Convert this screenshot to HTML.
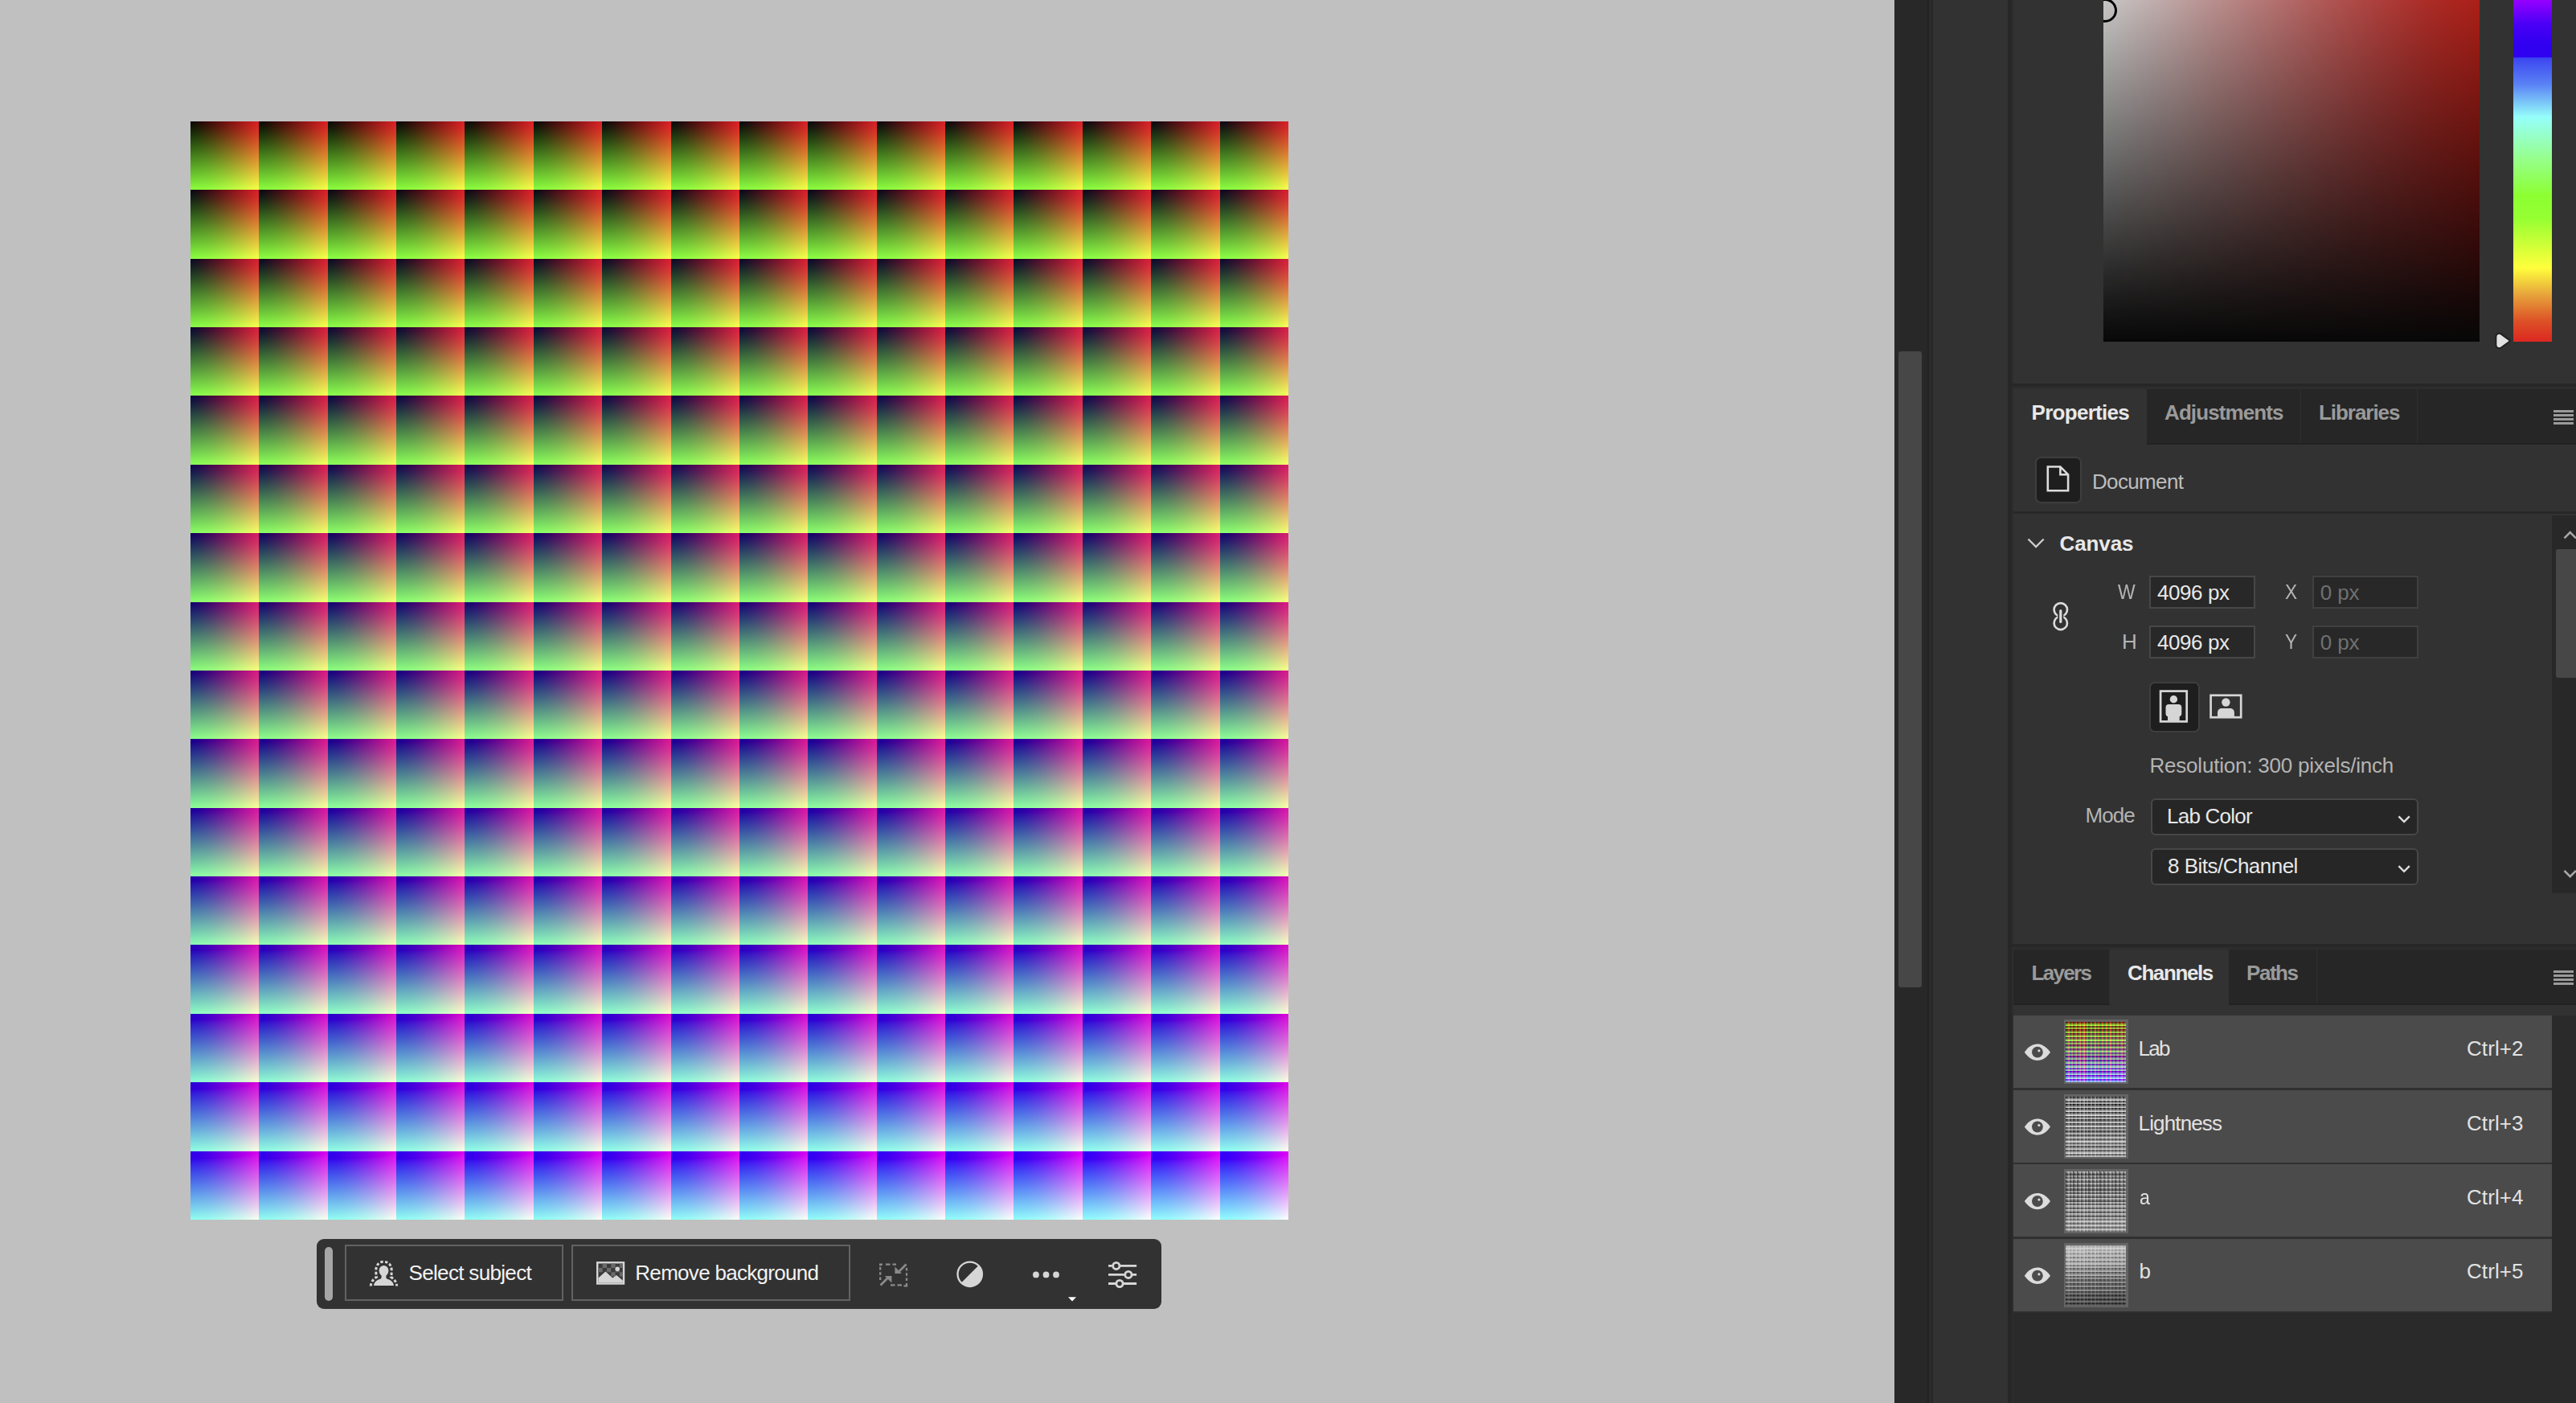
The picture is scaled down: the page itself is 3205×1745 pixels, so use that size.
<!DOCTYPE html>
<html lang="en"><head><meta charset="utf-8"><title>Lab Color document</title>
<style>
html,body{margin:0;padding:0}
body{width:3205px;height:1745px;overflow:hidden;background:#c0c0c0;position:relative;font-family:"Liberation Sans",sans-serif;font-size:26px}
div,i,b,svg{position:absolute;box-sizing:border-box;display:block}
.t{white-space:nowrap;line-height:30px;height:30px}
/* artwork */
.art{left:237px;top:151px;width:1366px;height:1366px;overflow:hidden;filter:url(#cm);isolation:isolate;background:#000}
.art .bl{left:0;top:0;width:1366px;height:1366px}
.art .bl div{left:0;width:1366px;height:85.9px}
.art .rg,.art .gg{left:0;top:0;width:1366px;height:1366px;mix-blend-mode:screen}
.art .rg{background:repeating-linear-gradient(90deg,#000 0,#f00 85.375px)}
.art .gg{background:repeating-linear-gradient(180deg,#000 0,#0f0 85.375px)}
/* thumbs */
.th{left:2568px;width:80px;height:80px;background:#646464}
.thi{left:2px;top:3px;width:75px;height:75px;overflow:hidden;isolation:isolate;background:#000}
.thi i{left:0;width:75.5px;height:5px}
.thi b{left:0;top:0;width:75.5px;height:75.5px;mix-blend-mode:screen}
.thi b.r{background:repeating-linear-gradient(90deg,#000 0,#f00 4.71875px)}
.thi b.g{background:repeating-linear-gradient(180deg,#000 0,#0f0 4.71875px)}
/* toolbar */
.tb{left:394px;top:1541px;width:1050.5px;height:86.6px;background:#323232;border-radius:9px}
.grip{left:403.6px;top:1551px;width:10.6px;height:67px;background:#a6a6a6;border-radius:5.3px}
.btn{top:1548px;height:70px;border:2px solid #626262}
/* right side */
.p{background:#323232}
.d{background:#282828}
.inp{width:131.5px;height:41px;background:#282828;border:2px solid #474747}
.dd{left:2675.7px;width:333px;height:46px;background:#262626;border:2px solid #474747;border-radius:6px}
.sq{background:#1e1e1e;border:2px solid #3e3e3e;border-radius:7px}
.row{left:2505px;width:670px;height:89.8px;background:#4b4b4b}
</style></head>
<body>
<svg width="0" height="0" style="left:0;top:0">
<defs>
<filter id="cm" x="0" y="0" width="100%" height="100%" color-interpolation-filters="linearRGB">
<feColorMatrix type="matrix" values="0.715 0.256 0.029 0 0.002  0.012 1.0 -0.016 0 0.002  0.0156 0.0465 0.938 0 0.0015  0 0 0 1 0"/>
</filter>
<filter id="cm2" x="0" y="0" width="100%" height="100%" color-interpolation-filters="linearRGB">
<feColorMatrix type="matrix" values="0.715 0.256 0.029 0 0.002  0.022 1.0 -0.016 0 0.002  0.013 0.0465 0.938 0 0.002  0 0 0 1 0"/>
</filter>
<filter id="fL" x="0" y="0" width="100%" height="100%" color-interpolation-filters="linearRGB">
<feColorMatrix type="matrix" values="0.2126 0.7152 0.0722 0 0  0.2126 0.7152 0.0722 0 0  0.2126 0.7152 0.0722 0 0  0 0 0 1 0"/>
</filter>
<filter id="fa" x="0" y="0" width="100%" height="100%" color-interpolation-filters="sRGB">
<feComponentTransfer><feFuncR type="gamma" exponent="2.2"/><feFuncG type="gamma" exponent="2.2"/><feFuncB type="gamma" exponent="2.2"/></feComponentTransfer>
<feColorMatrix type="matrix" values="0.4339 0.3762 0.1899 0 0  0.2126 0.7152 0.0722 0 0  0.0178 0.1095 0.8727 0 0  0 0 0 1 0"/>
<feComponentTransfer><feFuncR type="gamma" exponent="0.3333"/><feFuncG type="gamma" exponent="0.3333"/><feFuncB type="gamma" exponent="0.3333"/></feComponentTransfer>
<feColorMatrix type="matrix" values="1.96 -1.96 0 0 0.5  1.96 -1.96 0 0 0.5  1.96 -1.96 0 0 0.5  0 0 0 1 0"/>
</filter>
<filter id="fb" x="0" y="0" width="100%" height="100%" color-interpolation-filters="sRGB">
<feComponentTransfer><feFuncR type="gamma" exponent="2.2"/><feFuncG type="gamma" exponent="2.2"/><feFuncB type="gamma" exponent="2.2"/></feComponentTransfer>
<feColorMatrix type="matrix" values="0.4339 0.3762 0.1899 0 0  0.2126 0.7152 0.0722 0 0  0.0178 0.1095 0.8727 0 0  0 0 0 1 0"/>
<feComponentTransfer><feFuncR type="gamma" exponent="0.3333"/><feFuncG type="gamma" exponent="0.3333"/><feFuncB type="gamma" exponent="0.3333"/></feComponentTransfer>
<feColorMatrix type="matrix" values="0 0.784 -0.784 0 0.5  0 0.784 -0.784 0 0.5  0 0.784 -0.784 0 0.5  0 0 0 1 0"/>
</filter>
</defs>
</svg>
<!-- document artwork -->
<div class="art"><div class="bl"><div style="top:0.000px;background:linear-gradient(90deg,rgb(0,0,0) 0% 6.25%,rgb(0,0,1) 6.25% 12.5%,rgb(0,0,2) 12.5% 18.75%,rgb(0,0,3) 18.75% 25%,rgb(0,0,4) 25% 31.25%,rgb(0,0,5) 31.25% 37.5%,rgb(0,0,6) 37.5% 43.75%,rgb(0,0,7) 43.75% 50%,rgb(0,0,8) 50% 56.25%,rgb(0,0,9) 56.25% 62.5%,rgb(0,0,10) 62.5% 68.75%,rgb(0,0,11) 68.75% 75%,rgb(0,0,12) 75% 81.25%,rgb(0,0,13) 81.25% 87.5%,rgb(0,0,14) 87.5% 93.75%,rgb(0,0,15) 93.75% 100%)"></div><div style="top:85.375px;background:linear-gradient(90deg,rgb(0,0,16) 0% 6.25%,rgb(0,0,17) 6.25% 12.5%,rgb(0,0,18) 12.5% 18.75%,rgb(0,0,19) 18.75% 25%,rgb(0,0,20) 25% 31.25%,rgb(0,0,21) 31.25% 37.5%,rgb(0,0,22) 37.5% 43.75%,rgb(0,0,23) 43.75% 50%,rgb(0,0,24) 50% 56.25%,rgb(0,0,25) 56.25% 62.5%,rgb(0,0,26) 62.5% 68.75%,rgb(0,0,27) 68.75% 75%,rgb(0,0,28) 75% 81.25%,rgb(0,0,29) 81.25% 87.5%,rgb(0,0,30) 87.5% 93.75%,rgb(0,0,31) 93.75% 100%)"></div><div style="top:170.750px;background:linear-gradient(90deg,rgb(0,0,32) 0% 6.25%,rgb(0,0,33) 6.25% 12.5%,rgb(0,0,34) 12.5% 18.75%,rgb(0,0,35) 18.75% 25%,rgb(0,0,36) 25% 31.25%,rgb(0,0,37) 31.25% 37.5%,rgb(0,0,38) 37.5% 43.75%,rgb(0,0,39) 43.75% 50%,rgb(0,0,40) 50% 56.25%,rgb(0,0,41) 56.25% 62.5%,rgb(0,0,42) 62.5% 68.75%,rgb(0,0,43) 68.75% 75%,rgb(0,0,44) 75% 81.25%,rgb(0,0,45) 81.25% 87.5%,rgb(0,0,46) 87.5% 93.75%,rgb(0,0,47) 93.75% 100%)"></div><div style="top:256.125px;background:linear-gradient(90deg,rgb(0,0,48) 0% 6.25%,rgb(0,0,49) 6.25% 12.5%,rgb(0,0,50) 12.5% 18.75%,rgb(0,0,51) 18.75% 25%,rgb(0,0,52) 25% 31.25%,rgb(0,0,53) 31.25% 37.5%,rgb(0,0,54) 37.5% 43.75%,rgb(0,0,55) 43.75% 50%,rgb(0,0,56) 50% 56.25%,rgb(0,0,57) 56.25% 62.5%,rgb(0,0,58) 62.5% 68.75%,rgb(0,0,59) 68.75% 75%,rgb(0,0,60) 75% 81.25%,rgb(0,0,61) 81.25% 87.5%,rgb(0,0,62) 87.5% 93.75%,rgb(0,0,63) 93.75% 100%)"></div><div style="top:341.500px;background:linear-gradient(90deg,rgb(0,0,64) 0% 6.25%,rgb(0,0,65) 6.25% 12.5%,rgb(0,0,66) 12.5% 18.75%,rgb(0,0,67) 18.75% 25%,rgb(0,0,68) 25% 31.25%,rgb(0,0,69) 31.25% 37.5%,rgb(0,0,70) 37.5% 43.75%,rgb(0,0,71) 43.75% 50%,rgb(0,0,72) 50% 56.25%,rgb(0,0,73) 56.25% 62.5%,rgb(0,0,74) 62.5% 68.75%,rgb(0,0,75) 68.75% 75%,rgb(0,0,76) 75% 81.25%,rgb(0,0,77) 81.25% 87.5%,rgb(0,0,78) 87.5% 93.75%,rgb(0,0,79) 93.75% 100%)"></div><div style="top:426.875px;background:linear-gradient(90deg,rgb(0,0,80) 0% 6.25%,rgb(0,0,81) 6.25% 12.5%,rgb(0,0,82) 12.5% 18.75%,rgb(0,0,83) 18.75% 25%,rgb(0,0,84) 25% 31.25%,rgb(0,0,85) 31.25% 37.5%,rgb(0,0,86) 37.5% 43.75%,rgb(0,0,87) 43.75% 50%,rgb(0,0,88) 50% 56.25%,rgb(0,0,89) 56.25% 62.5%,rgb(0,0,90) 62.5% 68.75%,rgb(0,0,91) 68.75% 75%,rgb(0,0,92) 75% 81.25%,rgb(0,0,93) 81.25% 87.5%,rgb(0,0,94) 87.5% 93.75%,rgb(0,0,95) 93.75% 100%)"></div><div style="top:512.250px;background:linear-gradient(90deg,rgb(0,0,96) 0% 6.25%,rgb(0,0,97) 6.25% 12.5%,rgb(0,0,98) 12.5% 18.75%,rgb(0,0,99) 18.75% 25%,rgb(0,0,100) 25% 31.25%,rgb(0,0,101) 31.25% 37.5%,rgb(0,0,102) 37.5% 43.75%,rgb(0,0,103) 43.75% 50%,rgb(0,0,104) 50% 56.25%,rgb(0,0,105) 56.25% 62.5%,rgb(0,0,106) 62.5% 68.75%,rgb(0,0,107) 68.75% 75%,rgb(0,0,108) 75% 81.25%,rgb(0,0,109) 81.25% 87.5%,rgb(0,0,110) 87.5% 93.75%,rgb(0,0,111) 93.75% 100%)"></div><div style="top:597.625px;background:linear-gradient(90deg,rgb(0,0,112) 0% 6.25%,rgb(0,0,113) 6.25% 12.5%,rgb(0,0,114) 12.5% 18.75%,rgb(0,0,115) 18.75% 25%,rgb(0,0,116) 25% 31.25%,rgb(0,0,117) 31.25% 37.5%,rgb(0,0,118) 37.5% 43.75%,rgb(0,0,119) 43.75% 50%,rgb(0,0,120) 50% 56.25%,rgb(0,0,121) 56.25% 62.5%,rgb(0,0,122) 62.5% 68.75%,rgb(0,0,123) 68.75% 75%,rgb(0,0,124) 75% 81.25%,rgb(0,0,125) 81.25% 87.5%,rgb(0,0,126) 87.5% 93.75%,rgb(0,0,127) 93.75% 100%)"></div><div style="top:683.000px;background:linear-gradient(90deg,rgb(0,0,128) 0% 6.25%,rgb(0,0,129) 6.25% 12.5%,rgb(0,0,130) 12.5% 18.75%,rgb(0,0,131) 18.75% 25%,rgb(0,0,132) 25% 31.25%,rgb(0,0,133) 31.25% 37.5%,rgb(0,0,134) 37.5% 43.75%,rgb(0,0,135) 43.75% 50%,rgb(0,0,136) 50% 56.25%,rgb(0,0,137) 56.25% 62.5%,rgb(0,0,138) 62.5% 68.75%,rgb(0,0,139) 68.75% 75%,rgb(0,0,140) 75% 81.25%,rgb(0,0,141) 81.25% 87.5%,rgb(0,0,142) 87.5% 93.75%,rgb(0,0,143) 93.75% 100%)"></div><div style="top:768.375px;background:linear-gradient(90deg,rgb(0,0,144) 0% 6.25%,rgb(0,0,145) 6.25% 12.5%,rgb(0,0,146) 12.5% 18.75%,rgb(0,0,147) 18.75% 25%,rgb(0,0,148) 25% 31.25%,rgb(0,0,149) 31.25% 37.5%,rgb(0,0,150) 37.5% 43.75%,rgb(0,0,151) 43.75% 50%,rgb(0,0,152) 50% 56.25%,rgb(0,0,153) 56.25% 62.5%,rgb(0,0,154) 62.5% 68.75%,rgb(0,0,155) 68.75% 75%,rgb(0,0,156) 75% 81.25%,rgb(0,0,157) 81.25% 87.5%,rgb(0,0,158) 87.5% 93.75%,rgb(0,0,159) 93.75% 100%)"></div><div style="top:853.750px;background:linear-gradient(90deg,rgb(0,0,160) 0% 6.25%,rgb(0,0,161) 6.25% 12.5%,rgb(0,0,162) 12.5% 18.75%,rgb(0,0,163) 18.75% 25%,rgb(0,0,164) 25% 31.25%,rgb(0,0,165) 31.25% 37.5%,rgb(0,0,166) 37.5% 43.75%,rgb(0,0,167) 43.75% 50%,rgb(0,0,168) 50% 56.25%,rgb(0,0,169) 56.25% 62.5%,rgb(0,0,170) 62.5% 68.75%,rgb(0,0,171) 68.75% 75%,rgb(0,0,172) 75% 81.25%,rgb(0,0,173) 81.25% 87.5%,rgb(0,0,174) 87.5% 93.75%,rgb(0,0,175) 93.75% 100%)"></div><div style="top:939.125px;background:linear-gradient(90deg,rgb(0,0,176) 0% 6.25%,rgb(0,0,177) 6.25% 12.5%,rgb(0,0,178) 12.5% 18.75%,rgb(0,0,179) 18.75% 25%,rgb(0,0,180) 25% 31.25%,rgb(0,0,181) 31.25% 37.5%,rgb(0,0,182) 37.5% 43.75%,rgb(0,0,183) 43.75% 50%,rgb(0,0,184) 50% 56.25%,rgb(0,0,185) 56.25% 62.5%,rgb(0,0,186) 62.5% 68.75%,rgb(0,0,187) 68.75% 75%,rgb(0,0,188) 75% 81.25%,rgb(0,0,189) 81.25% 87.5%,rgb(0,0,190) 87.5% 93.75%,rgb(0,0,191) 93.75% 100%)"></div><div style="top:1024.500px;background:linear-gradient(90deg,rgb(0,0,192) 0% 6.25%,rgb(0,0,193) 6.25% 12.5%,rgb(0,0,194) 12.5% 18.75%,rgb(0,0,195) 18.75% 25%,rgb(0,0,196) 25% 31.25%,rgb(0,0,197) 31.25% 37.5%,rgb(0,0,198) 37.5% 43.75%,rgb(0,0,199) 43.75% 50%,rgb(0,0,200) 50% 56.25%,rgb(0,0,201) 56.25% 62.5%,rgb(0,0,202) 62.5% 68.75%,rgb(0,0,203) 68.75% 75%,rgb(0,0,204) 75% 81.25%,rgb(0,0,205) 81.25% 87.5%,rgb(0,0,206) 87.5% 93.75%,rgb(0,0,207) 93.75% 100%)"></div><div style="top:1109.875px;background:linear-gradient(90deg,rgb(0,0,208) 0% 6.25%,rgb(0,0,209) 6.25% 12.5%,rgb(0,0,210) 12.5% 18.75%,rgb(0,0,211) 18.75% 25%,rgb(0,0,212) 25% 31.25%,rgb(0,0,213) 31.25% 37.5%,rgb(0,0,214) 37.5% 43.75%,rgb(0,0,215) 43.75% 50%,rgb(0,0,216) 50% 56.25%,rgb(0,0,217) 56.25% 62.5%,rgb(0,0,218) 62.5% 68.75%,rgb(0,0,219) 68.75% 75%,rgb(0,0,220) 75% 81.25%,rgb(0,0,221) 81.25% 87.5%,rgb(0,0,222) 87.5% 93.75%,rgb(0,0,223) 93.75% 100%)"></div><div style="top:1195.250px;background:linear-gradient(90deg,rgb(0,0,224) 0% 6.25%,rgb(0,0,225) 6.25% 12.5%,rgb(0,0,226) 12.5% 18.75%,rgb(0,0,227) 18.75% 25%,rgb(0,0,228) 25% 31.25%,rgb(0,0,229) 31.25% 37.5%,rgb(0,0,230) 37.5% 43.75%,rgb(0,0,231) 43.75% 50%,rgb(0,0,232) 50% 56.25%,rgb(0,0,233) 56.25% 62.5%,rgb(0,0,234) 62.5% 68.75%,rgb(0,0,235) 68.75% 75%,rgb(0,0,236) 75% 81.25%,rgb(0,0,237) 81.25% 87.5%,rgb(0,0,238) 87.5% 93.75%,rgb(0,0,239) 93.75% 100%)"></div><div style="top:1280.625px;background:linear-gradient(90deg,rgb(0,0,240) 0% 6.25%,rgb(0,0,241) 6.25% 12.5%,rgb(0,0,242) 12.5% 18.75%,rgb(0,0,243) 18.75% 25%,rgb(0,0,244) 25% 31.25%,rgb(0,0,245) 31.25% 37.5%,rgb(0,0,246) 37.5% 43.75%,rgb(0,0,247) 43.75% 50%,rgb(0,0,248) 50% 56.25%,rgb(0,0,249) 56.25% 62.5%,rgb(0,0,250) 62.5% 68.75%,rgb(0,0,251) 68.75% 75%,rgb(0,0,252) 75% 81.25%,rgb(0,0,253) 81.25% 87.5%,rgb(0,0,254) 87.5% 93.75%,rgb(0,0,255) 93.75% 100%)"></div></div><div class="rg"></div><div class="gg"></div></div>
<!-- contextual task bar -->
<div class="tb"></div>
<div class="grip"></div>
<div class="btn" style="left:429px;width:272px"></div>
<div class="btn" style="left:711px;width:346.6px"></div>
<svg style="left:394px;top:1541px" width="1051" height="87" viewBox="394 1541 1051 87">
<!-- select subject -->
<g fill="#d6d6d6">
<ellipse cx="477.5" cy="1580.6" rx="5.9" ry="6.7"/>
<path d="M474.6 1585.5h5.8v3.2c0 1 .6 1.6 1.7 2 4.6 1.3 7.3 4 8 8.3H464.9c.7-4.3 3.400-7 8-8.300 1.100-.4 1.700-1 1.700-2z"/>
</g>
<path d="M461.300 1599.500C461.600 1595 463.500 1592 468.600 1588.300C467.900 1586 467.800 1583 467.800 1580C467.800 1573.500 471.600 1569.300 477.500 1569.300S487.200 1573.500 487.200 1580C487.200 1583 487.100 1586 486.400 1588.300C491.500 1592 493.400 1595 493.700 1599.500" fill="none" stroke="#d6d6d6" stroke-width="3" stroke-dasharray="3.400 2.300"/>
<!-- remove background -->
<rect x="743.200" y="1570.300" width="32.800" height="26.200" fill="#3a3a3a" stroke="#d6d6d6" stroke-width="2.400"/>
<g fill="#6a6a6a"><rect x="744.400" y="1577" width="5.300" height="5.300"/><rect x="749.700" y="1571.500" width="5.300" height="5.500"/><rect x="755" y="1577" width="5.300" height="5.300"/><rect x="760.300" y="1571.500" width="5.300" height="5.500"/><rect x="765.600" y="1577" width="5.300" height="5.300"/><rect x="770.900" y="1571.500" width="4" height="5.500"/><rect x="760.300" y="1582.300" width="5.300" height="5.300"/><rect x="770.900" y="1582.300" width="4" height="5.300"/></g>
<path d="M744.400 1589.500l9-8 8.800 8 4.800-3.600 7.800 6.600v2.800H744.400z" fill="#d6d6d6"/>
<circle cx="768.200" cy="1578.300" r="2.700" fill="#d6d6d6"/>
<!-- shrink selection (disabled) -->
<g stroke="#8a8a8a" fill="none" stroke-width="2.300">
<path d="M1102 1572.600h13" stroke-dasharray="5.500 3"/>
<path d="M1095.200 1576v16" stroke-dasharray="3.500 2.800"/>
<path d="M1128 1577v16" stroke-dasharray="3.500 2.800"/>
<path d="M1108 1598.300h15" stroke-dasharray="5.500 3"/>
<path d="M1094 1572.600h4M1095.200 1571.500v3M1128 1596v3.400h-3.500"/>
<path d="M1127.500 1572.500l-9 9M1095.500 1598.500l9-9" stroke-width="2.800"/>
</g>
<path d="M1113.400 1575.500v8.600h8.600zM1109.400 1595.600v-8.600h-8.600z" fill="#8a8a8a"/>
<!-- contrast circle -->
<circle cx="1206.700" cy="1584.800" r="15.200" fill="none" stroke="#d6d6d6" stroke-width="2.300"/>
<path d="M1217.450 1574.050A15.200 15.200 0 0 1 1195.950 1595.550z" fill="#d6d6d6"/>
<!-- more -->
<g fill="#d6d6d6"><circle cx="1288.900" cy="1585.400" r="3.900"/><circle cx="1301.500" cy="1585.400" r="3.900"/><circle cx="1314" cy="1585.400" r="3.900"/></g>
<path d="M1329 1613.300h10l-5 5.200z" fill="#fff"/>
<!-- sliders -->
<g stroke="#d6d6d6" stroke-width="2.800" fill="none">
<path d="M1379 1574.400h4.800M1393.800 1574.400h20.300M1379 1585.400h19.900M1408.900 1585.400h5.200M1379 1596.500h9M1398 1596.500h16.100"/>
<circle cx="1388.800" cy="1574.400" r="4.100"/><circle cx="1403.900" cy="1585.400" r="4.100"/><circle cx="1393" cy="1596.500" r="4.100"/>
</g>
</svg>

<!-- canvas scrollbar + dock chrome -->
<div class="d" style="left:2357px;top:0;width:41px;height:1745px"></div>
<div style="left:2362px;top:437px;width:29px;height:791px;background:#474747;border-radius:3px"></div>
<div style="left:2398px;top:0;width:2px;height:1745px;background:#222"></div>
<div style="left:2400px;top:0;width:3px;height:1745px;background:#2c2c2c"></div>
<div style="left:2403px;top:0;width:2px;height:1745px;background:#272727"></div>
<div class="p" style="left:2405px;top:0;width:93px;height:1745px"></div>
<div class="d" style="left:2498px;top:0;width:707px;height:1745px;background:#272727"></div>
<div style="left:2503px;top:0;width:702px;height:477px;background:#2d2d2d"></div>
<div style="left:2503px;top:481px;width:702px;height:693px;background:#2d2d2d"></div>
<div style="left:2503px;top:1178px;width:702px;height:567px;background:#2d2d2d"></div>

<!-- colour panel -->
<div class="p" style="left:2505px;top:0;width:700px;height:477px"></div>
<div style="left:2617px;top:0;width:468px;height:425px;overflow:hidden">
<div style="left:0;top:-122px;width:468px;height:547px;filter:url(#cm2);background:linear-gradient(to top,#000,rgba(0,0,0,0)),linear-gradient(to right,#fff,#f00)"></div>
<div style="left:-12.900px;top:-2.200px;width:30px;height:30px;border:3px solid #000;border-radius:50%"></div>
</div>
<div style="left:3127px;top:0;width:48px;height:425px;background:linear-gradient(to bottom,#9600ff 0,#4a00f5 30px,#3000f0 55px,#3000f0 71px,#3c46f0 72px,#5a82f5 105px,#96fffa 146px,#96ff8c 197px,#8cff32 243px,#96ff32 272px,#ffff3c 333px,#e8a83c 365px,#dc5026 400px,#dc2821 425px)"></div>
<svg style="left:3100px;top:410px" width="28" height="28" viewBox="3100 410 28 28"><path d="M3110.700 415.900L3121.700 423.900L3110.700 431.900Q3106.400 432.900 3106.400 428.500V419.300Q3106.400 414.900 3110.700 415.900Z" fill="#e2e2e2" stroke="#212121" stroke-width="4" stroke-linejoin="round" paint-order="stroke"/></svg>

<!-- properties panel -->
<div style="left:2505px;top:483.500px;width:700px;height:67.500px;background:#262626"></div>
<div style="left:2505px;top:551px;width:700px;height:2px;background:#222"></div>
<div class="p" style="left:2505px;top:553px;width:700px;height:621px"></div>
<div class="p" style="left:2505px;top:483.500px;width:166px;height:70.500px"></div>
<div style="left:2862px;top:484px;width:1px;height:67px;background:#2f2f2f"></div>
<div style="left:3007px;top:484px;width:1px;height:67px;background:#2f2f2f"></div>
<div style="left:3177px;top:510px;width:25px;height:18px;background:repeating-linear-gradient(to bottom,#9a9a9a 0,#9a9a9a 3px,transparent 3px,transparent 5px)"></div>
<div class="sq" style="left:2532px;top:567.700px;width:58px;height:58px"></div>
<svg style="left:2540px;top:575px" width="42" height="42" viewBox="2540 575 42 42"><path d="M2547.800 580.500h15.600l9.700 9.700v20H2547.800zM2563.400 580.500v9.700h9.700" fill="none" stroke="#dcdcdc" stroke-width="2.600"/></svg>
<div class="d" style="left:2505px;top:636px;width:700px;height:3px"></div>
<!-- properties scrollbar -->
<div class="d" style="left:3175px;top:641px;width:30px;height:470px"></div>
<div style="left:3180px;top:683px;width:30px;height:159.500px;background:#474747;border-radius:3px"></div>
<svg style="left:3175px;top:641px" width="30" height="470" viewBox="3175 641 30 470"><path d="M3190.500 669.300l7.200-7.200 7.200 7.200M3190.500 1083l7.200 7.200 7.200-7.200" fill="none" stroke="#a8a8a8" stroke-width="2.500"/></svg>
<!-- canvas section -->
<svg style="left:2515px;top:660px" width="70" height="135" viewBox="2515 660 70 135">
<path d="M2523.500 670.500l9.600 9.600 9.600-9.600" fill="none" stroke="#cfcfcf" stroke-width="2.200"/>
<g fill="none" stroke="#dcdcdc" stroke-width="2.600"><circle cx="2563.800" cy="758.300" r="8.200"/><circle cx="2563.800" cy="774.900" r="8.200"/></g>
<path d="M2563.800 759v15" stroke="#323232" stroke-width="7" stroke-linecap="round"/>
<path d="M2563.800 759.500v14" stroke="#dcdcdc" stroke-width="3.200" stroke-linecap="round"/>
</svg>
<div class="inp" style="left:2674.300px;top:715.600px"></div>
<div class="inp" style="left:2877px;top:715.600px;border-color:#404040"></div>
<div class="inp" style="left:2674.300px;top:778px"></div>
<div class="inp" style="left:2877px;top:778px;border-color:#404040"></div>
<div class="sq" style="left:2673.700px;top:847.700px;width:63px;height:63.300px"></div>
<svg style="left:2680px;top:852px" width="116" height="54" viewBox="2680 852 116 54">
<rect x="2688.100" y="859.600" width="32.600" height="37.800" fill="none" stroke="#d6d6d6" stroke-width="2.700"/>
<g fill="#d6d6d6"><circle cx="2704.400" cy="869.700" r="4.700"/><path d="M2698.500 875.900h11.800a4 4 0 0 1 4 4v8a3.500 3.500 0 0 1-2.600 3.300v5H2697v-5a3.500 3.500 0 0 1-2.500-3.300v-8a4 4 0 0 1 4-4z"/>
<circle cx="2769.400" cy="873.500" r="5.200"/><path d="M2764 881h10.900a5 5 0 0 1 5 5v6.500H2759V886a5 5 0 0 1 5-5z"/></g>
<rect x="2750.600" y="864.800" width="37.600" height="27.400" fill="none" stroke="#d6d6d6" stroke-width="2.700"/>
</svg>
<div class="dd" style="top:993px"></div>
<div class="dd" style="top:1054.800px"></div>
<svg style="left:2980px;top:1010px" width="24" height="80" viewBox="2980 1010 24 80"><path d="M2984.400 1015.300l6.700 6.700 6.700-6.700M2984.400 1077.100l6.700 6.700 6.700-6.700" fill="none" stroke="#dcdcdc" stroke-width="2.400"/></svg>

<!-- channels panel -->
<div style="left:2505px;top:1180.500px;width:700px;height:68px;background:#262626"></div>
<div style="left:2505px;top:1248.200px;width:700px;height:1.500px;background:#222"></div>
<div class="p" style="left:2505px;top:1249.700px;width:700px;height:13.300px"></div>
<div class="p" style="left:2625px;top:1180.500px;width:148px;height:70px"></div>
<div style="left:2624px;top:1181px;width:1px;height:67px;background:#2f2f2f"></div>
<div style="left:2882px;top:1181px;width:1px;height:67px;background:#2f2f2f"></div>
<div style="left:3177px;top:1207px;width:25px;height:18px;background:repeating-linear-gradient(to bottom,#9a9a9a 0,#9a9a9a 3px,transparent 3px,transparent 5px)"></div>
<div style="left:2505px;top:1263px;width:700px;height:482px;background:#2a2a2a"></div>
<div style="left:2505px;top:1263px;width:670px;height:370px;background:#303030"></div>
<div class="row" style="top:1263px"></div>
<div class="row" style="top:1356px"></div>
<div class="row" style="top:1448.300px"></div>
<div class="row" style="top:1541px"></div>
<svg style="left:2515px;top:1290px" width="40" height="320" viewBox="2515 1290 40 320">
<path d="M2518.800 1308.8c4.500-6.500 9.800-10.200 16.100-10.200s11.600 3.700 16.100 10.200c-4.500 6.500-9.800 10.200-16.100 10.200s-11.600-3.700-16.100-10.200z" fill="#dcdcdc"/><circle cx="2534.900" cy="1308.7" r="6.900" fill="#4b4b4b"/><circle cx="2536.900" cy="1306.8" r="1.600" fill="#dcdcdc"/>
<path d="M2518.800 1401.6c4.500-6.500 9.800-10.200 16.100-10.200s11.600 3.700 16.100 10.200c-4.500 6.500-9.800 10.200-16.100 10.200s-11.600-3.700-16.100-10.200z" fill="#dcdcdc"/><circle cx="2534.900" cy="1401.5" r="6.900" fill="#4b4b4b"/><circle cx="2536.900" cy="1399.6" r="1.600" fill="#dcdcdc"/>
<path d="M2518.800 1494.1c4.500-6.500 9.800-10.200 16.100-10.200s11.600 3.700 16.100 10.200c-4.500 6.500-9.800 10.200-16.100 10.200s-11.600-3.700-16.100-10.200z" fill="#dcdcdc"/><circle cx="2534.900" cy="1494" r="6.900" fill="#4b4b4b"/><circle cx="2536.900" cy="1492.1" r="1.600" fill="#dcdcdc"/>
<path d="M2518.800 1586.8c4.500-6.500 9.800-10.200 16.100-10.200s11.600 3.700 16.100 10.200c-4.500 6.500-9.800 10.200-16.100 10.200s-11.600-3.700-16.100-10.200z" fill="#dcdcdc"/><circle cx="2534.900" cy="1586.7" r="6.900" fill="#4b4b4b"/><circle cx="2536.900" cy="1584.8" r="1.600" fill="#dcdcdc"/>
</svg>
<div class="th" style="top:1268.3px"><div class="thi" style="filter:url(#cm)"><i style="top:0.000px;background:linear-gradient(90deg,rgb(0,0,0) 0% 6.25%,rgb(0,0,1) 6.25% 12.5%,rgb(0,0,2) 12.5% 18.75%,rgb(0,0,3) 18.75% 25%,rgb(0,0,4) 25% 31.25%,rgb(0,0,5) 31.25% 37.5%,rgb(0,0,6) 37.5% 43.75%,rgb(0,0,7) 43.75% 50%,rgb(0,0,8) 50% 56.25%,rgb(0,0,9) 56.25% 62.5%,rgb(0,0,10) 62.5% 68.75%,rgb(0,0,11) 68.75% 75%,rgb(0,0,12) 75% 81.25%,rgb(0,0,13) 81.25% 87.5%,rgb(0,0,14) 87.5% 93.75%,rgb(0,0,15) 93.75% 100%)"></i><i style="top:4.719px;background:linear-gradient(90deg,rgb(0,0,16) 0% 6.25%,rgb(0,0,17) 6.25% 12.5%,rgb(0,0,18) 12.5% 18.75%,rgb(0,0,19) 18.75% 25%,rgb(0,0,20) 25% 31.25%,rgb(0,0,21) 31.25% 37.5%,rgb(0,0,22) 37.5% 43.75%,rgb(0,0,23) 43.75% 50%,rgb(0,0,24) 50% 56.25%,rgb(0,0,25) 56.25% 62.5%,rgb(0,0,26) 62.5% 68.75%,rgb(0,0,27) 68.75% 75%,rgb(0,0,28) 75% 81.25%,rgb(0,0,29) 81.25% 87.5%,rgb(0,0,30) 87.5% 93.75%,rgb(0,0,31) 93.75% 100%)"></i><i style="top:9.438px;background:linear-gradient(90deg,rgb(0,0,32) 0% 6.25%,rgb(0,0,33) 6.25% 12.5%,rgb(0,0,34) 12.5% 18.75%,rgb(0,0,35) 18.75% 25%,rgb(0,0,36) 25% 31.25%,rgb(0,0,37) 31.25% 37.5%,rgb(0,0,38) 37.5% 43.75%,rgb(0,0,39) 43.75% 50%,rgb(0,0,40) 50% 56.25%,rgb(0,0,41) 56.25% 62.5%,rgb(0,0,42) 62.5% 68.75%,rgb(0,0,43) 68.75% 75%,rgb(0,0,44) 75% 81.25%,rgb(0,0,45) 81.25% 87.5%,rgb(0,0,46) 87.5% 93.75%,rgb(0,0,47) 93.75% 100%)"></i><i style="top:14.156px;background:linear-gradient(90deg,rgb(0,0,48) 0% 6.25%,rgb(0,0,49) 6.25% 12.5%,rgb(0,0,50) 12.5% 18.75%,rgb(0,0,51) 18.75% 25%,rgb(0,0,52) 25% 31.25%,rgb(0,0,53) 31.25% 37.5%,rgb(0,0,54) 37.5% 43.75%,rgb(0,0,55) 43.75% 50%,rgb(0,0,56) 50% 56.25%,rgb(0,0,57) 56.25% 62.5%,rgb(0,0,58) 62.5% 68.75%,rgb(0,0,59) 68.75% 75%,rgb(0,0,60) 75% 81.25%,rgb(0,0,61) 81.25% 87.5%,rgb(0,0,62) 87.5% 93.75%,rgb(0,0,63) 93.75% 100%)"></i><i style="top:18.875px;background:linear-gradient(90deg,rgb(0,0,64) 0% 6.25%,rgb(0,0,65) 6.25% 12.5%,rgb(0,0,66) 12.5% 18.75%,rgb(0,0,67) 18.75% 25%,rgb(0,0,68) 25% 31.25%,rgb(0,0,69) 31.25% 37.5%,rgb(0,0,70) 37.5% 43.75%,rgb(0,0,71) 43.75% 50%,rgb(0,0,72) 50% 56.25%,rgb(0,0,73) 56.25% 62.5%,rgb(0,0,74) 62.5% 68.75%,rgb(0,0,75) 68.75% 75%,rgb(0,0,76) 75% 81.25%,rgb(0,0,77) 81.25% 87.5%,rgb(0,0,78) 87.5% 93.75%,rgb(0,0,79) 93.75% 100%)"></i><i style="top:23.594px;background:linear-gradient(90deg,rgb(0,0,80) 0% 6.25%,rgb(0,0,81) 6.25% 12.5%,rgb(0,0,82) 12.5% 18.75%,rgb(0,0,83) 18.75% 25%,rgb(0,0,84) 25% 31.25%,rgb(0,0,85) 31.25% 37.5%,rgb(0,0,86) 37.5% 43.75%,rgb(0,0,87) 43.75% 50%,rgb(0,0,88) 50% 56.25%,rgb(0,0,89) 56.25% 62.5%,rgb(0,0,90) 62.5% 68.75%,rgb(0,0,91) 68.75% 75%,rgb(0,0,92) 75% 81.25%,rgb(0,0,93) 81.25% 87.5%,rgb(0,0,94) 87.5% 93.75%,rgb(0,0,95) 93.75% 100%)"></i><i style="top:28.312px;background:linear-gradient(90deg,rgb(0,0,96) 0% 6.25%,rgb(0,0,97) 6.25% 12.5%,rgb(0,0,98) 12.5% 18.75%,rgb(0,0,99) 18.75% 25%,rgb(0,0,100) 25% 31.25%,rgb(0,0,101) 31.25% 37.5%,rgb(0,0,102) 37.5% 43.75%,rgb(0,0,103) 43.75% 50%,rgb(0,0,104) 50% 56.25%,rgb(0,0,105) 56.25% 62.5%,rgb(0,0,106) 62.5% 68.75%,rgb(0,0,107) 68.75% 75%,rgb(0,0,108) 75% 81.25%,rgb(0,0,109) 81.25% 87.5%,rgb(0,0,110) 87.5% 93.75%,rgb(0,0,111) 93.75% 100%)"></i><i style="top:33.031px;background:linear-gradient(90deg,rgb(0,0,112) 0% 6.25%,rgb(0,0,113) 6.25% 12.5%,rgb(0,0,114) 12.5% 18.75%,rgb(0,0,115) 18.75% 25%,rgb(0,0,116) 25% 31.25%,rgb(0,0,117) 31.25% 37.5%,rgb(0,0,118) 37.5% 43.75%,rgb(0,0,119) 43.75% 50%,rgb(0,0,120) 50% 56.25%,rgb(0,0,121) 56.25% 62.5%,rgb(0,0,122) 62.5% 68.75%,rgb(0,0,123) 68.75% 75%,rgb(0,0,124) 75% 81.25%,rgb(0,0,125) 81.25% 87.5%,rgb(0,0,126) 87.5% 93.75%,rgb(0,0,127) 93.75% 100%)"></i><i style="top:37.750px;background:linear-gradient(90deg,rgb(0,0,128) 0% 6.25%,rgb(0,0,129) 6.25% 12.5%,rgb(0,0,130) 12.5% 18.75%,rgb(0,0,131) 18.75% 25%,rgb(0,0,132) 25% 31.25%,rgb(0,0,133) 31.25% 37.5%,rgb(0,0,134) 37.5% 43.75%,rgb(0,0,135) 43.75% 50%,rgb(0,0,136) 50% 56.25%,rgb(0,0,137) 56.25% 62.5%,rgb(0,0,138) 62.5% 68.75%,rgb(0,0,139) 68.75% 75%,rgb(0,0,140) 75% 81.25%,rgb(0,0,141) 81.25% 87.5%,rgb(0,0,142) 87.5% 93.75%,rgb(0,0,143) 93.75% 100%)"></i><i style="top:42.469px;background:linear-gradient(90deg,rgb(0,0,144) 0% 6.25%,rgb(0,0,145) 6.25% 12.5%,rgb(0,0,146) 12.5% 18.75%,rgb(0,0,147) 18.75% 25%,rgb(0,0,148) 25% 31.25%,rgb(0,0,149) 31.25% 37.5%,rgb(0,0,150) 37.5% 43.75%,rgb(0,0,151) 43.75% 50%,rgb(0,0,152) 50% 56.25%,rgb(0,0,153) 56.25% 62.5%,rgb(0,0,154) 62.5% 68.75%,rgb(0,0,155) 68.75% 75%,rgb(0,0,156) 75% 81.25%,rgb(0,0,157) 81.25% 87.5%,rgb(0,0,158) 87.5% 93.75%,rgb(0,0,159) 93.75% 100%)"></i><i style="top:47.188px;background:linear-gradient(90deg,rgb(0,0,160) 0% 6.25%,rgb(0,0,161) 6.25% 12.5%,rgb(0,0,162) 12.5% 18.75%,rgb(0,0,163) 18.75% 25%,rgb(0,0,164) 25% 31.25%,rgb(0,0,165) 31.25% 37.5%,rgb(0,0,166) 37.5% 43.75%,rgb(0,0,167) 43.75% 50%,rgb(0,0,168) 50% 56.25%,rgb(0,0,169) 56.25% 62.5%,rgb(0,0,170) 62.5% 68.75%,rgb(0,0,171) 68.75% 75%,rgb(0,0,172) 75% 81.25%,rgb(0,0,173) 81.25% 87.5%,rgb(0,0,174) 87.5% 93.75%,rgb(0,0,175) 93.75% 100%)"></i><i style="top:51.906px;background:linear-gradient(90deg,rgb(0,0,176) 0% 6.25%,rgb(0,0,177) 6.25% 12.5%,rgb(0,0,178) 12.5% 18.75%,rgb(0,0,179) 18.75% 25%,rgb(0,0,180) 25% 31.25%,rgb(0,0,181) 31.25% 37.5%,rgb(0,0,182) 37.5% 43.75%,rgb(0,0,183) 43.75% 50%,rgb(0,0,184) 50% 56.25%,rgb(0,0,185) 56.25% 62.5%,rgb(0,0,186) 62.5% 68.75%,rgb(0,0,187) 68.75% 75%,rgb(0,0,188) 75% 81.25%,rgb(0,0,189) 81.25% 87.5%,rgb(0,0,190) 87.5% 93.75%,rgb(0,0,191) 93.75% 100%)"></i><i style="top:56.625px;background:linear-gradient(90deg,rgb(0,0,192) 0% 6.25%,rgb(0,0,193) 6.25% 12.5%,rgb(0,0,194) 12.5% 18.75%,rgb(0,0,195) 18.75% 25%,rgb(0,0,196) 25% 31.25%,rgb(0,0,197) 31.25% 37.5%,rgb(0,0,198) 37.5% 43.75%,rgb(0,0,199) 43.75% 50%,rgb(0,0,200) 50% 56.25%,rgb(0,0,201) 56.25% 62.5%,rgb(0,0,202) 62.5% 68.75%,rgb(0,0,203) 68.75% 75%,rgb(0,0,204) 75% 81.25%,rgb(0,0,205) 81.25% 87.5%,rgb(0,0,206) 87.5% 93.75%,rgb(0,0,207) 93.75% 100%)"></i><i style="top:61.344px;background:linear-gradient(90deg,rgb(0,0,208) 0% 6.25%,rgb(0,0,209) 6.25% 12.5%,rgb(0,0,210) 12.5% 18.75%,rgb(0,0,211) 18.75% 25%,rgb(0,0,212) 25% 31.25%,rgb(0,0,213) 31.25% 37.5%,rgb(0,0,214) 37.5% 43.75%,rgb(0,0,215) 43.75% 50%,rgb(0,0,216) 50% 56.25%,rgb(0,0,217) 56.25% 62.5%,rgb(0,0,218) 62.5% 68.75%,rgb(0,0,219) 68.75% 75%,rgb(0,0,220) 75% 81.25%,rgb(0,0,221) 81.25% 87.5%,rgb(0,0,222) 87.5% 93.75%,rgb(0,0,223) 93.75% 100%)"></i><i style="top:66.062px;background:linear-gradient(90deg,rgb(0,0,224) 0% 6.25%,rgb(0,0,225) 6.25% 12.5%,rgb(0,0,226) 12.5% 18.75%,rgb(0,0,227) 18.75% 25%,rgb(0,0,228) 25% 31.25%,rgb(0,0,229) 31.25% 37.5%,rgb(0,0,230) 37.5% 43.75%,rgb(0,0,231) 43.75% 50%,rgb(0,0,232) 50% 56.25%,rgb(0,0,233) 56.25% 62.5%,rgb(0,0,234) 62.5% 68.75%,rgb(0,0,235) 68.75% 75%,rgb(0,0,236) 75% 81.25%,rgb(0,0,237) 81.25% 87.5%,rgb(0,0,238) 87.5% 93.75%,rgb(0,0,239) 93.75% 100%)"></i><i style="top:70.781px;background:linear-gradient(90deg,rgb(0,0,240) 0% 6.25%,rgb(0,0,241) 6.25% 12.5%,rgb(0,0,242) 12.5% 18.75%,rgb(0,0,243) 18.75% 25%,rgb(0,0,244) 25% 31.25%,rgb(0,0,245) 31.25% 37.5%,rgb(0,0,246) 37.5% 43.75%,rgb(0,0,247) 43.75% 50%,rgb(0,0,248) 50% 56.25%,rgb(0,0,249) 56.25% 62.5%,rgb(0,0,250) 62.5% 68.75%,rgb(0,0,251) 68.75% 75%,rgb(0,0,252) 75% 81.25%,rgb(0,0,253) 81.25% 87.5%,rgb(0,0,254) 87.5% 93.75%,rgb(0,0,255) 93.75% 100%)"></i><b class="r"></b><b class="g"></b></div></div><div class="th" style="top:1361.1px"><div class="thi" style="filter:url(#fL)"><i style="top:0.000px;background:linear-gradient(90deg,rgb(0,0,0) 0% 6.25%,rgb(0,0,1) 6.25% 12.5%,rgb(0,0,2) 12.5% 18.75%,rgb(0,0,3) 18.75% 25%,rgb(0,0,4) 25% 31.25%,rgb(0,0,5) 31.25% 37.5%,rgb(0,0,6) 37.5% 43.75%,rgb(0,0,7) 43.75% 50%,rgb(0,0,8) 50% 56.25%,rgb(0,0,9) 56.25% 62.5%,rgb(0,0,10) 62.5% 68.75%,rgb(0,0,11) 68.75% 75%,rgb(0,0,12) 75% 81.25%,rgb(0,0,13) 81.25% 87.5%,rgb(0,0,14) 87.5% 93.75%,rgb(0,0,15) 93.75% 100%)"></i><i style="top:4.719px;background:linear-gradient(90deg,rgb(0,0,16) 0% 6.25%,rgb(0,0,17) 6.25% 12.5%,rgb(0,0,18) 12.5% 18.75%,rgb(0,0,19) 18.75% 25%,rgb(0,0,20) 25% 31.25%,rgb(0,0,21) 31.25% 37.5%,rgb(0,0,22) 37.5% 43.75%,rgb(0,0,23) 43.75% 50%,rgb(0,0,24) 50% 56.25%,rgb(0,0,25) 56.25% 62.5%,rgb(0,0,26) 62.5% 68.75%,rgb(0,0,27) 68.75% 75%,rgb(0,0,28) 75% 81.25%,rgb(0,0,29) 81.25% 87.5%,rgb(0,0,30) 87.5% 93.75%,rgb(0,0,31) 93.75% 100%)"></i><i style="top:9.438px;background:linear-gradient(90deg,rgb(0,0,32) 0% 6.25%,rgb(0,0,33) 6.25% 12.5%,rgb(0,0,34) 12.5% 18.75%,rgb(0,0,35) 18.75% 25%,rgb(0,0,36) 25% 31.25%,rgb(0,0,37) 31.25% 37.5%,rgb(0,0,38) 37.5% 43.75%,rgb(0,0,39) 43.75% 50%,rgb(0,0,40) 50% 56.25%,rgb(0,0,41) 56.25% 62.5%,rgb(0,0,42) 62.5% 68.75%,rgb(0,0,43) 68.75% 75%,rgb(0,0,44) 75% 81.25%,rgb(0,0,45) 81.25% 87.5%,rgb(0,0,46) 87.5% 93.75%,rgb(0,0,47) 93.75% 100%)"></i><i style="top:14.156px;background:linear-gradient(90deg,rgb(0,0,48) 0% 6.25%,rgb(0,0,49) 6.25% 12.5%,rgb(0,0,50) 12.5% 18.75%,rgb(0,0,51) 18.75% 25%,rgb(0,0,52) 25% 31.25%,rgb(0,0,53) 31.25% 37.5%,rgb(0,0,54) 37.5% 43.75%,rgb(0,0,55) 43.75% 50%,rgb(0,0,56) 50% 56.25%,rgb(0,0,57) 56.25% 62.5%,rgb(0,0,58) 62.5% 68.75%,rgb(0,0,59) 68.75% 75%,rgb(0,0,60) 75% 81.25%,rgb(0,0,61) 81.25% 87.5%,rgb(0,0,62) 87.5% 93.75%,rgb(0,0,63) 93.75% 100%)"></i><i style="top:18.875px;background:linear-gradient(90deg,rgb(0,0,64) 0% 6.25%,rgb(0,0,65) 6.25% 12.5%,rgb(0,0,66) 12.5% 18.75%,rgb(0,0,67) 18.75% 25%,rgb(0,0,68) 25% 31.25%,rgb(0,0,69) 31.25% 37.5%,rgb(0,0,70) 37.5% 43.75%,rgb(0,0,71) 43.75% 50%,rgb(0,0,72) 50% 56.25%,rgb(0,0,73) 56.25% 62.5%,rgb(0,0,74) 62.5% 68.75%,rgb(0,0,75) 68.75% 75%,rgb(0,0,76) 75% 81.25%,rgb(0,0,77) 81.25% 87.5%,rgb(0,0,78) 87.5% 93.75%,rgb(0,0,79) 93.75% 100%)"></i><i style="top:23.594px;background:linear-gradient(90deg,rgb(0,0,80) 0% 6.25%,rgb(0,0,81) 6.25% 12.5%,rgb(0,0,82) 12.5% 18.75%,rgb(0,0,83) 18.75% 25%,rgb(0,0,84) 25% 31.25%,rgb(0,0,85) 31.25% 37.5%,rgb(0,0,86) 37.5% 43.75%,rgb(0,0,87) 43.75% 50%,rgb(0,0,88) 50% 56.25%,rgb(0,0,89) 56.25% 62.5%,rgb(0,0,90) 62.5% 68.75%,rgb(0,0,91) 68.75% 75%,rgb(0,0,92) 75% 81.25%,rgb(0,0,93) 81.25% 87.5%,rgb(0,0,94) 87.5% 93.75%,rgb(0,0,95) 93.75% 100%)"></i><i style="top:28.312px;background:linear-gradient(90deg,rgb(0,0,96) 0% 6.25%,rgb(0,0,97) 6.25% 12.5%,rgb(0,0,98) 12.5% 18.75%,rgb(0,0,99) 18.75% 25%,rgb(0,0,100) 25% 31.25%,rgb(0,0,101) 31.25% 37.5%,rgb(0,0,102) 37.5% 43.75%,rgb(0,0,103) 43.75% 50%,rgb(0,0,104) 50% 56.25%,rgb(0,0,105) 56.25% 62.5%,rgb(0,0,106) 62.5% 68.75%,rgb(0,0,107) 68.75% 75%,rgb(0,0,108) 75% 81.25%,rgb(0,0,109) 81.25% 87.5%,rgb(0,0,110) 87.5% 93.75%,rgb(0,0,111) 93.75% 100%)"></i><i style="top:33.031px;background:linear-gradient(90deg,rgb(0,0,112) 0% 6.25%,rgb(0,0,113) 6.25% 12.5%,rgb(0,0,114) 12.5% 18.75%,rgb(0,0,115) 18.75% 25%,rgb(0,0,116) 25% 31.25%,rgb(0,0,117) 31.25% 37.5%,rgb(0,0,118) 37.5% 43.75%,rgb(0,0,119) 43.75% 50%,rgb(0,0,120) 50% 56.25%,rgb(0,0,121) 56.25% 62.5%,rgb(0,0,122) 62.5% 68.75%,rgb(0,0,123) 68.75% 75%,rgb(0,0,124) 75% 81.25%,rgb(0,0,125) 81.25% 87.5%,rgb(0,0,126) 87.5% 93.75%,rgb(0,0,127) 93.75% 100%)"></i><i style="top:37.750px;background:linear-gradient(90deg,rgb(0,0,128) 0% 6.25%,rgb(0,0,129) 6.25% 12.5%,rgb(0,0,130) 12.5% 18.75%,rgb(0,0,131) 18.75% 25%,rgb(0,0,132) 25% 31.25%,rgb(0,0,133) 31.25% 37.5%,rgb(0,0,134) 37.5% 43.75%,rgb(0,0,135) 43.75% 50%,rgb(0,0,136) 50% 56.25%,rgb(0,0,137) 56.25% 62.5%,rgb(0,0,138) 62.5% 68.75%,rgb(0,0,139) 68.75% 75%,rgb(0,0,140) 75% 81.25%,rgb(0,0,141) 81.25% 87.5%,rgb(0,0,142) 87.5% 93.75%,rgb(0,0,143) 93.75% 100%)"></i><i style="top:42.469px;background:linear-gradient(90deg,rgb(0,0,144) 0% 6.25%,rgb(0,0,145) 6.25% 12.5%,rgb(0,0,146) 12.5% 18.75%,rgb(0,0,147) 18.75% 25%,rgb(0,0,148) 25% 31.25%,rgb(0,0,149) 31.25% 37.5%,rgb(0,0,150) 37.5% 43.75%,rgb(0,0,151) 43.75% 50%,rgb(0,0,152) 50% 56.25%,rgb(0,0,153) 56.25% 62.5%,rgb(0,0,154) 62.5% 68.75%,rgb(0,0,155) 68.75% 75%,rgb(0,0,156) 75% 81.25%,rgb(0,0,157) 81.25% 87.5%,rgb(0,0,158) 87.5% 93.75%,rgb(0,0,159) 93.75% 100%)"></i><i style="top:47.188px;background:linear-gradient(90deg,rgb(0,0,160) 0% 6.25%,rgb(0,0,161) 6.25% 12.5%,rgb(0,0,162) 12.5% 18.75%,rgb(0,0,163) 18.75% 25%,rgb(0,0,164) 25% 31.25%,rgb(0,0,165) 31.25% 37.5%,rgb(0,0,166) 37.5% 43.75%,rgb(0,0,167) 43.75% 50%,rgb(0,0,168) 50% 56.25%,rgb(0,0,169) 56.25% 62.5%,rgb(0,0,170) 62.5% 68.75%,rgb(0,0,171) 68.75% 75%,rgb(0,0,172) 75% 81.25%,rgb(0,0,173) 81.25% 87.5%,rgb(0,0,174) 87.5% 93.75%,rgb(0,0,175) 93.75% 100%)"></i><i style="top:51.906px;background:linear-gradient(90deg,rgb(0,0,176) 0% 6.25%,rgb(0,0,177) 6.25% 12.5%,rgb(0,0,178) 12.5% 18.75%,rgb(0,0,179) 18.75% 25%,rgb(0,0,180) 25% 31.25%,rgb(0,0,181) 31.25% 37.5%,rgb(0,0,182) 37.5% 43.75%,rgb(0,0,183) 43.75% 50%,rgb(0,0,184) 50% 56.25%,rgb(0,0,185) 56.25% 62.5%,rgb(0,0,186) 62.5% 68.75%,rgb(0,0,187) 68.75% 75%,rgb(0,0,188) 75% 81.25%,rgb(0,0,189) 81.25% 87.5%,rgb(0,0,190) 87.5% 93.75%,rgb(0,0,191) 93.75% 100%)"></i><i style="top:56.625px;background:linear-gradient(90deg,rgb(0,0,192) 0% 6.25%,rgb(0,0,193) 6.25% 12.5%,rgb(0,0,194) 12.5% 18.75%,rgb(0,0,195) 18.75% 25%,rgb(0,0,196) 25% 31.25%,rgb(0,0,197) 31.25% 37.5%,rgb(0,0,198) 37.5% 43.75%,rgb(0,0,199) 43.75% 50%,rgb(0,0,200) 50% 56.25%,rgb(0,0,201) 56.25% 62.5%,rgb(0,0,202) 62.5% 68.75%,rgb(0,0,203) 68.75% 75%,rgb(0,0,204) 75% 81.25%,rgb(0,0,205) 81.25% 87.5%,rgb(0,0,206) 87.5% 93.75%,rgb(0,0,207) 93.75% 100%)"></i><i style="top:61.344px;background:linear-gradient(90deg,rgb(0,0,208) 0% 6.25%,rgb(0,0,209) 6.25% 12.5%,rgb(0,0,210) 12.5% 18.75%,rgb(0,0,211) 18.75% 25%,rgb(0,0,212) 25% 31.25%,rgb(0,0,213) 31.25% 37.5%,rgb(0,0,214) 37.5% 43.75%,rgb(0,0,215) 43.75% 50%,rgb(0,0,216) 50% 56.25%,rgb(0,0,217) 56.25% 62.5%,rgb(0,0,218) 62.5% 68.75%,rgb(0,0,219) 68.75% 75%,rgb(0,0,220) 75% 81.25%,rgb(0,0,221) 81.25% 87.5%,rgb(0,0,222) 87.5% 93.75%,rgb(0,0,223) 93.75% 100%)"></i><i style="top:66.062px;background:linear-gradient(90deg,rgb(0,0,224) 0% 6.25%,rgb(0,0,225) 6.25% 12.5%,rgb(0,0,226) 12.5% 18.75%,rgb(0,0,227) 18.75% 25%,rgb(0,0,228) 25% 31.25%,rgb(0,0,229) 31.25% 37.5%,rgb(0,0,230) 37.5% 43.75%,rgb(0,0,231) 43.75% 50%,rgb(0,0,232) 50% 56.25%,rgb(0,0,233) 56.25% 62.5%,rgb(0,0,234) 62.5% 68.75%,rgb(0,0,235) 68.75% 75%,rgb(0,0,236) 75% 81.25%,rgb(0,0,237) 81.25% 87.5%,rgb(0,0,238) 87.5% 93.75%,rgb(0,0,239) 93.75% 100%)"></i><i style="top:70.781px;background:linear-gradient(90deg,rgb(0,0,240) 0% 6.25%,rgb(0,0,241) 6.25% 12.5%,rgb(0,0,242) 12.5% 18.75%,rgb(0,0,243) 18.75% 25%,rgb(0,0,244) 25% 31.25%,rgb(0,0,245) 31.25% 37.5%,rgb(0,0,246) 37.5% 43.75%,rgb(0,0,247) 43.75% 50%,rgb(0,0,248) 50% 56.25%,rgb(0,0,249) 56.25% 62.5%,rgb(0,0,250) 62.5% 68.75%,rgb(0,0,251) 68.75% 75%,rgb(0,0,252) 75% 81.25%,rgb(0,0,253) 81.25% 87.5%,rgb(0,0,254) 87.5% 93.75%,rgb(0,0,255) 93.75% 100%)"></i><b class="r"></b><b class="g"></b></div></div><div class="th" style="top:1453.6px"><div class="thi" style="filter:url(#fa)"><i style="top:0.000px;background:linear-gradient(90deg,rgb(0,0,0) 0% 6.25%,rgb(0,0,1) 6.25% 12.5%,rgb(0,0,2) 12.5% 18.75%,rgb(0,0,3) 18.75% 25%,rgb(0,0,4) 25% 31.25%,rgb(0,0,5) 31.25% 37.5%,rgb(0,0,6) 37.5% 43.75%,rgb(0,0,7) 43.75% 50%,rgb(0,0,8) 50% 56.25%,rgb(0,0,9) 56.25% 62.5%,rgb(0,0,10) 62.5% 68.75%,rgb(0,0,11) 68.75% 75%,rgb(0,0,12) 75% 81.25%,rgb(0,0,13) 81.25% 87.5%,rgb(0,0,14) 87.5% 93.75%,rgb(0,0,15) 93.75% 100%)"></i><i style="top:4.719px;background:linear-gradient(90deg,rgb(0,0,16) 0% 6.25%,rgb(0,0,17) 6.25% 12.5%,rgb(0,0,18) 12.5% 18.75%,rgb(0,0,19) 18.75% 25%,rgb(0,0,20) 25% 31.25%,rgb(0,0,21) 31.25% 37.5%,rgb(0,0,22) 37.5% 43.75%,rgb(0,0,23) 43.75% 50%,rgb(0,0,24) 50% 56.25%,rgb(0,0,25) 56.25% 62.5%,rgb(0,0,26) 62.5% 68.75%,rgb(0,0,27) 68.75% 75%,rgb(0,0,28) 75% 81.25%,rgb(0,0,29) 81.25% 87.5%,rgb(0,0,30) 87.5% 93.75%,rgb(0,0,31) 93.75% 100%)"></i><i style="top:9.438px;background:linear-gradient(90deg,rgb(0,0,32) 0% 6.25%,rgb(0,0,33) 6.25% 12.5%,rgb(0,0,34) 12.5% 18.75%,rgb(0,0,35) 18.75% 25%,rgb(0,0,36) 25% 31.25%,rgb(0,0,37) 31.25% 37.5%,rgb(0,0,38) 37.5% 43.75%,rgb(0,0,39) 43.75% 50%,rgb(0,0,40) 50% 56.25%,rgb(0,0,41) 56.25% 62.5%,rgb(0,0,42) 62.5% 68.75%,rgb(0,0,43) 68.75% 75%,rgb(0,0,44) 75% 81.25%,rgb(0,0,45) 81.25% 87.5%,rgb(0,0,46) 87.5% 93.75%,rgb(0,0,47) 93.75% 100%)"></i><i style="top:14.156px;background:linear-gradient(90deg,rgb(0,0,48) 0% 6.25%,rgb(0,0,49) 6.25% 12.5%,rgb(0,0,50) 12.5% 18.75%,rgb(0,0,51) 18.75% 25%,rgb(0,0,52) 25% 31.25%,rgb(0,0,53) 31.25% 37.5%,rgb(0,0,54) 37.5% 43.75%,rgb(0,0,55) 43.75% 50%,rgb(0,0,56) 50% 56.25%,rgb(0,0,57) 56.25% 62.5%,rgb(0,0,58) 62.5% 68.75%,rgb(0,0,59) 68.75% 75%,rgb(0,0,60) 75% 81.25%,rgb(0,0,61) 81.25% 87.5%,rgb(0,0,62) 87.5% 93.75%,rgb(0,0,63) 93.75% 100%)"></i><i style="top:18.875px;background:linear-gradient(90deg,rgb(0,0,64) 0% 6.25%,rgb(0,0,65) 6.25% 12.5%,rgb(0,0,66) 12.5% 18.75%,rgb(0,0,67) 18.75% 25%,rgb(0,0,68) 25% 31.25%,rgb(0,0,69) 31.25% 37.5%,rgb(0,0,70) 37.5% 43.75%,rgb(0,0,71) 43.75% 50%,rgb(0,0,72) 50% 56.25%,rgb(0,0,73) 56.25% 62.5%,rgb(0,0,74) 62.5% 68.75%,rgb(0,0,75) 68.75% 75%,rgb(0,0,76) 75% 81.25%,rgb(0,0,77) 81.25% 87.5%,rgb(0,0,78) 87.5% 93.75%,rgb(0,0,79) 93.75% 100%)"></i><i style="top:23.594px;background:linear-gradient(90deg,rgb(0,0,80) 0% 6.25%,rgb(0,0,81) 6.25% 12.5%,rgb(0,0,82) 12.5% 18.75%,rgb(0,0,83) 18.75% 25%,rgb(0,0,84) 25% 31.25%,rgb(0,0,85) 31.25% 37.5%,rgb(0,0,86) 37.5% 43.75%,rgb(0,0,87) 43.75% 50%,rgb(0,0,88) 50% 56.25%,rgb(0,0,89) 56.25% 62.5%,rgb(0,0,90) 62.5% 68.75%,rgb(0,0,91) 68.75% 75%,rgb(0,0,92) 75% 81.25%,rgb(0,0,93) 81.25% 87.5%,rgb(0,0,94) 87.5% 93.75%,rgb(0,0,95) 93.75% 100%)"></i><i style="top:28.312px;background:linear-gradient(90deg,rgb(0,0,96) 0% 6.25%,rgb(0,0,97) 6.25% 12.5%,rgb(0,0,98) 12.5% 18.75%,rgb(0,0,99) 18.75% 25%,rgb(0,0,100) 25% 31.25%,rgb(0,0,101) 31.25% 37.5%,rgb(0,0,102) 37.5% 43.75%,rgb(0,0,103) 43.75% 50%,rgb(0,0,104) 50% 56.25%,rgb(0,0,105) 56.25% 62.5%,rgb(0,0,106) 62.5% 68.75%,rgb(0,0,107) 68.75% 75%,rgb(0,0,108) 75% 81.25%,rgb(0,0,109) 81.25% 87.5%,rgb(0,0,110) 87.5% 93.75%,rgb(0,0,111) 93.75% 100%)"></i><i style="top:33.031px;background:linear-gradient(90deg,rgb(0,0,112) 0% 6.25%,rgb(0,0,113) 6.25% 12.5%,rgb(0,0,114) 12.5% 18.75%,rgb(0,0,115) 18.75% 25%,rgb(0,0,116) 25% 31.25%,rgb(0,0,117) 31.25% 37.5%,rgb(0,0,118) 37.5% 43.75%,rgb(0,0,119) 43.75% 50%,rgb(0,0,120) 50% 56.25%,rgb(0,0,121) 56.25% 62.5%,rgb(0,0,122) 62.5% 68.75%,rgb(0,0,123) 68.75% 75%,rgb(0,0,124) 75% 81.25%,rgb(0,0,125) 81.25% 87.5%,rgb(0,0,126) 87.5% 93.75%,rgb(0,0,127) 93.75% 100%)"></i><i style="top:37.750px;background:linear-gradient(90deg,rgb(0,0,128) 0% 6.25%,rgb(0,0,129) 6.25% 12.5%,rgb(0,0,130) 12.5% 18.75%,rgb(0,0,131) 18.75% 25%,rgb(0,0,132) 25% 31.25%,rgb(0,0,133) 31.25% 37.5%,rgb(0,0,134) 37.5% 43.75%,rgb(0,0,135) 43.75% 50%,rgb(0,0,136) 50% 56.25%,rgb(0,0,137) 56.25% 62.5%,rgb(0,0,138) 62.5% 68.75%,rgb(0,0,139) 68.75% 75%,rgb(0,0,140) 75% 81.25%,rgb(0,0,141) 81.25% 87.5%,rgb(0,0,142) 87.5% 93.75%,rgb(0,0,143) 93.75% 100%)"></i><i style="top:42.469px;background:linear-gradient(90deg,rgb(0,0,144) 0% 6.25%,rgb(0,0,145) 6.25% 12.5%,rgb(0,0,146) 12.5% 18.75%,rgb(0,0,147) 18.75% 25%,rgb(0,0,148) 25% 31.25%,rgb(0,0,149) 31.25% 37.5%,rgb(0,0,150) 37.5% 43.75%,rgb(0,0,151) 43.75% 50%,rgb(0,0,152) 50% 56.25%,rgb(0,0,153) 56.25% 62.5%,rgb(0,0,154) 62.5% 68.75%,rgb(0,0,155) 68.75% 75%,rgb(0,0,156) 75% 81.25%,rgb(0,0,157) 81.25% 87.5%,rgb(0,0,158) 87.5% 93.75%,rgb(0,0,159) 93.75% 100%)"></i><i style="top:47.188px;background:linear-gradient(90deg,rgb(0,0,160) 0% 6.25%,rgb(0,0,161) 6.25% 12.5%,rgb(0,0,162) 12.5% 18.75%,rgb(0,0,163) 18.75% 25%,rgb(0,0,164) 25% 31.25%,rgb(0,0,165) 31.25% 37.5%,rgb(0,0,166) 37.5% 43.75%,rgb(0,0,167) 43.75% 50%,rgb(0,0,168) 50% 56.25%,rgb(0,0,169) 56.25% 62.5%,rgb(0,0,170) 62.5% 68.75%,rgb(0,0,171) 68.75% 75%,rgb(0,0,172) 75% 81.25%,rgb(0,0,173) 81.25% 87.5%,rgb(0,0,174) 87.5% 93.75%,rgb(0,0,175) 93.75% 100%)"></i><i style="top:51.906px;background:linear-gradient(90deg,rgb(0,0,176) 0% 6.25%,rgb(0,0,177) 6.25% 12.5%,rgb(0,0,178) 12.5% 18.75%,rgb(0,0,179) 18.75% 25%,rgb(0,0,180) 25% 31.25%,rgb(0,0,181) 31.25% 37.5%,rgb(0,0,182) 37.5% 43.75%,rgb(0,0,183) 43.75% 50%,rgb(0,0,184) 50% 56.25%,rgb(0,0,185) 56.25% 62.5%,rgb(0,0,186) 62.5% 68.75%,rgb(0,0,187) 68.75% 75%,rgb(0,0,188) 75% 81.25%,rgb(0,0,189) 81.25% 87.5%,rgb(0,0,190) 87.5% 93.75%,rgb(0,0,191) 93.75% 100%)"></i><i style="top:56.625px;background:linear-gradient(90deg,rgb(0,0,192) 0% 6.25%,rgb(0,0,193) 6.25% 12.5%,rgb(0,0,194) 12.5% 18.75%,rgb(0,0,195) 18.75% 25%,rgb(0,0,196) 25% 31.25%,rgb(0,0,197) 31.25% 37.5%,rgb(0,0,198) 37.5% 43.75%,rgb(0,0,199) 43.75% 50%,rgb(0,0,200) 50% 56.25%,rgb(0,0,201) 56.25% 62.5%,rgb(0,0,202) 62.5% 68.75%,rgb(0,0,203) 68.75% 75%,rgb(0,0,204) 75% 81.25%,rgb(0,0,205) 81.25% 87.5%,rgb(0,0,206) 87.5% 93.75%,rgb(0,0,207) 93.75% 100%)"></i><i style="top:61.344px;background:linear-gradient(90deg,rgb(0,0,208) 0% 6.25%,rgb(0,0,209) 6.25% 12.5%,rgb(0,0,210) 12.5% 18.75%,rgb(0,0,211) 18.75% 25%,rgb(0,0,212) 25% 31.25%,rgb(0,0,213) 31.25% 37.5%,rgb(0,0,214) 37.5% 43.75%,rgb(0,0,215) 43.75% 50%,rgb(0,0,216) 50% 56.25%,rgb(0,0,217) 56.25% 62.5%,rgb(0,0,218) 62.5% 68.75%,rgb(0,0,219) 68.75% 75%,rgb(0,0,220) 75% 81.25%,rgb(0,0,221) 81.25% 87.5%,rgb(0,0,222) 87.5% 93.75%,rgb(0,0,223) 93.75% 100%)"></i><i style="top:66.062px;background:linear-gradient(90deg,rgb(0,0,224) 0% 6.25%,rgb(0,0,225) 6.25% 12.5%,rgb(0,0,226) 12.5% 18.75%,rgb(0,0,227) 18.75% 25%,rgb(0,0,228) 25% 31.25%,rgb(0,0,229) 31.25% 37.5%,rgb(0,0,230) 37.5% 43.75%,rgb(0,0,231) 43.75% 50%,rgb(0,0,232) 50% 56.25%,rgb(0,0,233) 56.25% 62.5%,rgb(0,0,234) 62.5% 68.75%,rgb(0,0,235) 68.75% 75%,rgb(0,0,236) 75% 81.25%,rgb(0,0,237) 81.25% 87.5%,rgb(0,0,238) 87.5% 93.75%,rgb(0,0,239) 93.75% 100%)"></i><i style="top:70.781px;background:linear-gradient(90deg,rgb(0,0,240) 0% 6.25%,rgb(0,0,241) 6.25% 12.5%,rgb(0,0,242) 12.5% 18.75%,rgb(0,0,243) 18.75% 25%,rgb(0,0,244) 25% 31.25%,rgb(0,0,245) 31.25% 37.5%,rgb(0,0,246) 37.5% 43.75%,rgb(0,0,247) 43.75% 50%,rgb(0,0,248) 50% 56.25%,rgb(0,0,249) 56.25% 62.5%,rgb(0,0,250) 62.5% 68.75%,rgb(0,0,251) 68.75% 75%,rgb(0,0,252) 75% 81.25%,rgb(0,0,253) 81.25% 87.5%,rgb(0,0,254) 87.5% 93.75%,rgb(0,0,255) 93.75% 100%)"></i><b class="r"></b><b class="g"></b></div></div><div class="th" style="top:1546.3px"><div class="thi" style="filter:url(#fb)"><i style="top:0.000px;background:linear-gradient(90deg,rgb(0,0,0) 0% 6.25%,rgb(0,0,1) 6.25% 12.5%,rgb(0,0,2) 12.5% 18.75%,rgb(0,0,3) 18.75% 25%,rgb(0,0,4) 25% 31.25%,rgb(0,0,5) 31.25% 37.5%,rgb(0,0,6) 37.5% 43.75%,rgb(0,0,7) 43.75% 50%,rgb(0,0,8) 50% 56.25%,rgb(0,0,9) 56.25% 62.5%,rgb(0,0,10) 62.5% 68.75%,rgb(0,0,11) 68.75% 75%,rgb(0,0,12) 75% 81.25%,rgb(0,0,13) 81.25% 87.5%,rgb(0,0,14) 87.5% 93.75%,rgb(0,0,15) 93.75% 100%)"></i><i style="top:4.719px;background:linear-gradient(90deg,rgb(0,0,16) 0% 6.25%,rgb(0,0,17) 6.25% 12.5%,rgb(0,0,18) 12.5% 18.75%,rgb(0,0,19) 18.75% 25%,rgb(0,0,20) 25% 31.25%,rgb(0,0,21) 31.25% 37.5%,rgb(0,0,22) 37.5% 43.75%,rgb(0,0,23) 43.75% 50%,rgb(0,0,24) 50% 56.25%,rgb(0,0,25) 56.25% 62.5%,rgb(0,0,26) 62.5% 68.75%,rgb(0,0,27) 68.75% 75%,rgb(0,0,28) 75% 81.25%,rgb(0,0,29) 81.25% 87.5%,rgb(0,0,30) 87.5% 93.75%,rgb(0,0,31) 93.75% 100%)"></i><i style="top:9.438px;background:linear-gradient(90deg,rgb(0,0,32) 0% 6.25%,rgb(0,0,33) 6.25% 12.5%,rgb(0,0,34) 12.5% 18.75%,rgb(0,0,35) 18.75% 25%,rgb(0,0,36) 25% 31.25%,rgb(0,0,37) 31.25% 37.5%,rgb(0,0,38) 37.5% 43.75%,rgb(0,0,39) 43.75% 50%,rgb(0,0,40) 50% 56.25%,rgb(0,0,41) 56.25% 62.5%,rgb(0,0,42) 62.5% 68.75%,rgb(0,0,43) 68.75% 75%,rgb(0,0,44) 75% 81.25%,rgb(0,0,45) 81.25% 87.5%,rgb(0,0,46) 87.5% 93.75%,rgb(0,0,47) 93.75% 100%)"></i><i style="top:14.156px;background:linear-gradient(90deg,rgb(0,0,48) 0% 6.25%,rgb(0,0,49) 6.25% 12.5%,rgb(0,0,50) 12.5% 18.75%,rgb(0,0,51) 18.75% 25%,rgb(0,0,52) 25% 31.25%,rgb(0,0,53) 31.25% 37.5%,rgb(0,0,54) 37.5% 43.75%,rgb(0,0,55) 43.75% 50%,rgb(0,0,56) 50% 56.25%,rgb(0,0,57) 56.25% 62.5%,rgb(0,0,58) 62.5% 68.75%,rgb(0,0,59) 68.75% 75%,rgb(0,0,60) 75% 81.25%,rgb(0,0,61) 81.25% 87.5%,rgb(0,0,62) 87.5% 93.75%,rgb(0,0,63) 93.75% 100%)"></i><i style="top:18.875px;background:linear-gradient(90deg,rgb(0,0,64) 0% 6.25%,rgb(0,0,65) 6.25% 12.5%,rgb(0,0,66) 12.5% 18.75%,rgb(0,0,67) 18.75% 25%,rgb(0,0,68) 25% 31.25%,rgb(0,0,69) 31.25% 37.5%,rgb(0,0,70) 37.5% 43.75%,rgb(0,0,71) 43.75% 50%,rgb(0,0,72) 50% 56.25%,rgb(0,0,73) 56.25% 62.5%,rgb(0,0,74) 62.5% 68.75%,rgb(0,0,75) 68.75% 75%,rgb(0,0,76) 75% 81.25%,rgb(0,0,77) 81.25% 87.5%,rgb(0,0,78) 87.5% 93.75%,rgb(0,0,79) 93.75% 100%)"></i><i style="top:23.594px;background:linear-gradient(90deg,rgb(0,0,80) 0% 6.25%,rgb(0,0,81) 6.25% 12.5%,rgb(0,0,82) 12.5% 18.75%,rgb(0,0,83) 18.75% 25%,rgb(0,0,84) 25% 31.25%,rgb(0,0,85) 31.25% 37.5%,rgb(0,0,86) 37.5% 43.75%,rgb(0,0,87) 43.75% 50%,rgb(0,0,88) 50% 56.25%,rgb(0,0,89) 56.25% 62.5%,rgb(0,0,90) 62.5% 68.75%,rgb(0,0,91) 68.75% 75%,rgb(0,0,92) 75% 81.25%,rgb(0,0,93) 81.25% 87.5%,rgb(0,0,94) 87.5% 93.75%,rgb(0,0,95) 93.75% 100%)"></i><i style="top:28.312px;background:linear-gradient(90deg,rgb(0,0,96) 0% 6.25%,rgb(0,0,97) 6.25% 12.5%,rgb(0,0,98) 12.5% 18.75%,rgb(0,0,99) 18.75% 25%,rgb(0,0,100) 25% 31.25%,rgb(0,0,101) 31.25% 37.5%,rgb(0,0,102) 37.5% 43.75%,rgb(0,0,103) 43.75% 50%,rgb(0,0,104) 50% 56.25%,rgb(0,0,105) 56.25% 62.5%,rgb(0,0,106) 62.5% 68.75%,rgb(0,0,107) 68.75% 75%,rgb(0,0,108) 75% 81.25%,rgb(0,0,109) 81.25% 87.5%,rgb(0,0,110) 87.5% 93.75%,rgb(0,0,111) 93.75% 100%)"></i><i style="top:33.031px;background:linear-gradient(90deg,rgb(0,0,112) 0% 6.25%,rgb(0,0,113) 6.25% 12.5%,rgb(0,0,114) 12.5% 18.75%,rgb(0,0,115) 18.75% 25%,rgb(0,0,116) 25% 31.25%,rgb(0,0,117) 31.25% 37.5%,rgb(0,0,118) 37.5% 43.75%,rgb(0,0,119) 43.75% 50%,rgb(0,0,120) 50% 56.25%,rgb(0,0,121) 56.25% 62.5%,rgb(0,0,122) 62.5% 68.75%,rgb(0,0,123) 68.75% 75%,rgb(0,0,124) 75% 81.25%,rgb(0,0,125) 81.25% 87.5%,rgb(0,0,126) 87.5% 93.75%,rgb(0,0,127) 93.75% 100%)"></i><i style="top:37.750px;background:linear-gradient(90deg,rgb(0,0,128) 0% 6.25%,rgb(0,0,129) 6.25% 12.5%,rgb(0,0,130) 12.5% 18.75%,rgb(0,0,131) 18.75% 25%,rgb(0,0,132) 25% 31.25%,rgb(0,0,133) 31.25% 37.5%,rgb(0,0,134) 37.5% 43.75%,rgb(0,0,135) 43.75% 50%,rgb(0,0,136) 50% 56.25%,rgb(0,0,137) 56.25% 62.5%,rgb(0,0,138) 62.5% 68.75%,rgb(0,0,139) 68.75% 75%,rgb(0,0,140) 75% 81.25%,rgb(0,0,141) 81.25% 87.5%,rgb(0,0,142) 87.5% 93.75%,rgb(0,0,143) 93.75% 100%)"></i><i style="top:42.469px;background:linear-gradient(90deg,rgb(0,0,144) 0% 6.25%,rgb(0,0,145) 6.25% 12.5%,rgb(0,0,146) 12.5% 18.75%,rgb(0,0,147) 18.75% 25%,rgb(0,0,148) 25% 31.25%,rgb(0,0,149) 31.25% 37.5%,rgb(0,0,150) 37.5% 43.75%,rgb(0,0,151) 43.75% 50%,rgb(0,0,152) 50% 56.25%,rgb(0,0,153) 56.25% 62.5%,rgb(0,0,154) 62.5% 68.75%,rgb(0,0,155) 68.75% 75%,rgb(0,0,156) 75% 81.25%,rgb(0,0,157) 81.25% 87.5%,rgb(0,0,158) 87.5% 93.75%,rgb(0,0,159) 93.75% 100%)"></i><i style="top:47.188px;background:linear-gradient(90deg,rgb(0,0,160) 0% 6.25%,rgb(0,0,161) 6.25% 12.5%,rgb(0,0,162) 12.5% 18.75%,rgb(0,0,163) 18.75% 25%,rgb(0,0,164) 25% 31.25%,rgb(0,0,165) 31.25% 37.5%,rgb(0,0,166) 37.5% 43.75%,rgb(0,0,167) 43.75% 50%,rgb(0,0,168) 50% 56.25%,rgb(0,0,169) 56.25% 62.5%,rgb(0,0,170) 62.5% 68.75%,rgb(0,0,171) 68.75% 75%,rgb(0,0,172) 75% 81.25%,rgb(0,0,173) 81.25% 87.5%,rgb(0,0,174) 87.5% 93.75%,rgb(0,0,175) 93.75% 100%)"></i><i style="top:51.906px;background:linear-gradient(90deg,rgb(0,0,176) 0% 6.25%,rgb(0,0,177) 6.25% 12.5%,rgb(0,0,178) 12.5% 18.75%,rgb(0,0,179) 18.75% 25%,rgb(0,0,180) 25% 31.25%,rgb(0,0,181) 31.25% 37.5%,rgb(0,0,182) 37.5% 43.75%,rgb(0,0,183) 43.75% 50%,rgb(0,0,184) 50% 56.25%,rgb(0,0,185) 56.25% 62.5%,rgb(0,0,186) 62.5% 68.75%,rgb(0,0,187) 68.75% 75%,rgb(0,0,188) 75% 81.25%,rgb(0,0,189) 81.25% 87.5%,rgb(0,0,190) 87.5% 93.75%,rgb(0,0,191) 93.75% 100%)"></i><i style="top:56.625px;background:linear-gradient(90deg,rgb(0,0,192) 0% 6.25%,rgb(0,0,193) 6.25% 12.5%,rgb(0,0,194) 12.5% 18.75%,rgb(0,0,195) 18.75% 25%,rgb(0,0,196) 25% 31.25%,rgb(0,0,197) 31.25% 37.5%,rgb(0,0,198) 37.5% 43.75%,rgb(0,0,199) 43.75% 50%,rgb(0,0,200) 50% 56.25%,rgb(0,0,201) 56.25% 62.5%,rgb(0,0,202) 62.5% 68.75%,rgb(0,0,203) 68.75% 75%,rgb(0,0,204) 75% 81.25%,rgb(0,0,205) 81.25% 87.5%,rgb(0,0,206) 87.5% 93.75%,rgb(0,0,207) 93.75% 100%)"></i><i style="top:61.344px;background:linear-gradient(90deg,rgb(0,0,208) 0% 6.25%,rgb(0,0,209) 6.25% 12.5%,rgb(0,0,210) 12.5% 18.75%,rgb(0,0,211) 18.75% 25%,rgb(0,0,212) 25% 31.25%,rgb(0,0,213) 31.25% 37.5%,rgb(0,0,214) 37.5% 43.75%,rgb(0,0,215) 43.75% 50%,rgb(0,0,216) 50% 56.25%,rgb(0,0,217) 56.25% 62.5%,rgb(0,0,218) 62.5% 68.75%,rgb(0,0,219) 68.75% 75%,rgb(0,0,220) 75% 81.25%,rgb(0,0,221) 81.25% 87.5%,rgb(0,0,222) 87.5% 93.75%,rgb(0,0,223) 93.75% 100%)"></i><i style="top:66.062px;background:linear-gradient(90deg,rgb(0,0,224) 0% 6.25%,rgb(0,0,225) 6.25% 12.5%,rgb(0,0,226) 12.5% 18.75%,rgb(0,0,227) 18.75% 25%,rgb(0,0,228) 25% 31.25%,rgb(0,0,229) 31.25% 37.5%,rgb(0,0,230) 37.5% 43.75%,rgb(0,0,231) 43.75% 50%,rgb(0,0,232) 50% 56.25%,rgb(0,0,233) 56.25% 62.5%,rgb(0,0,234) 62.5% 68.75%,rgb(0,0,235) 68.75% 75%,rgb(0,0,236) 75% 81.25%,rgb(0,0,237) 81.25% 87.5%,rgb(0,0,238) 87.5% 93.75%,rgb(0,0,239) 93.75% 100%)"></i><i style="top:70.781px;background:linear-gradient(90deg,rgb(0,0,240) 0% 6.25%,rgb(0,0,241) 6.25% 12.5%,rgb(0,0,242) 12.5% 18.75%,rgb(0,0,243) 18.75% 25%,rgb(0,0,244) 25% 31.25%,rgb(0,0,245) 31.25% 37.5%,rgb(0,0,246) 37.5% 43.75%,rgb(0,0,247) 43.75% 50%,rgb(0,0,248) 50% 56.25%,rgb(0,0,249) 56.25% 62.5%,rgb(0,0,250) 62.5% 68.75%,rgb(0,0,251) 68.75% 75%,rgb(0,0,252) 75% 81.25%,rgb(0,0,253) 81.25% 87.5%,rgb(0,0,254) 87.5% 93.75%,rgb(0,0,255) 93.75% 100%)"></i><b class="r"></b><b class="g"></b></div></div>
<div class="t" style="left:2527.60px;top:498.29px;color:#e8e8e8;font-weight:700;letter-spacing:-0.716px;">Properties</div>
<div class="t" style="left:2693.00px;top:498.29px;color:#9a9a9a;font-weight:700;letter-spacing:-0.900px;">Adjustments</div>
<div class="t" style="left:2885.00px;top:498.29px;color:#9a9a9a;font-weight:700;letter-spacing:-1.046px;">Libraries</div>
<div class="t" style="left:2603.00px;top:583.99px;color:#bdbdbd;letter-spacing:-0.653px;">Document</div>
<div class="t" style="left:2562.50px;top:660.69px;color:#e8e8e8;font-weight:700;letter-spacing:-0.108px;">Canvas</div>
<div class="t" style="left:2635.30px;top:721.19px;color:#b4b4b4;transform:scaleX(0.884);transform-origin:0.00px 0;">W</div>
<div class="t" style="left:2640.00px;top:783.49px;color:#b4b4b4;">H</div>
<div class="t" style="left:2684.00px;top:721.79px;color:#e8e8e8;letter-spacing:-0.421px;">4096 px</div>
<div class="t" style="left:2684.00px;top:784.09px;color:#e8e8e8;letter-spacing:-0.421px;">4096 px</div>
<div class="t" style="left:2843.00px;top:721.19px;color:#b4b4b4;transform:scaleX(0.871);transform-origin:0.00px 0;">X</div>
<div class="t" style="left:2843.00px;top:783.49px;color:#b4b4b4;transform:scaleX(0.871);transform-origin:0.00px 0;">Y</div>
<div class="t" style="left:2886.80px;top:721.79px;color:#707070;letter-spacing:-0.115px;">0 px</div>
<div class="t" style="left:2886.80px;top:784.09px;color:#707070;letter-spacing:-0.115px;">0 px</div>
<div class="t" style="left:2674.50px;top:937.19px;color:#b4b4b4;letter-spacing:-0.213px;">Resolution: 300 pixels/inch</div>
<div class="t" style="left:2594.50px;top:998.99px;color:#b4b4b4;letter-spacing:-0.959px;">Mode</div>
<div class="t" style="left:2696.00px;top:1000.29px;color:#e8e8e8;letter-spacing:-0.760px;">Lab Color</div>
<div class="t" style="left:2697.00px;top:1062.29px;color:#e8e8e8;letter-spacing:-0.517px;">8 Bits/Channel</div>
<div class="t" style="left:2527.60px;top:1195.19px;color:#9a9a9a;font-weight:700;letter-spacing:-1.700px;">Layers</div>
<div class="t" style="left:2647.00px;top:1195.19px;color:#e8e8e8;font-weight:700;letter-spacing:-1.395px;">Channels</div>
<div class="t" style="left:2795.00px;top:1195.19px;color:#9a9a9a;font-weight:700;letter-spacing:-1.460px;">Paths</div>
<div class="t" style="left:2660.60px;top:1288.99px;color:#e2e2e2;letter-spacing:-1.700px;">Lab</div>
<div class="t" style="left:3069.00px;top:1288.99px;color:#e2e2e2;letter-spacing:0.076px;">Ctrl+2</div>
<div class="t" style="left:2660.60px;top:1381.79px;color:#e2e2e2;letter-spacing:-0.862px;">Lightness</div>
<div class="t" style="left:3069.00px;top:1381.79px;color:#e2e2e2;letter-spacing:0.076px;">Ctrl+3</div>
<div class="t" style="left:2661.60px;top:1473.99px;color:#e2e2e2;transform:scaleX(0.893);transform-origin:1.00px 0;">a</div>
<div class="t" style="left:3069.00px;top:1473.99px;color:#e2e2e2;letter-spacing:0.076px;">Ctrl+4</div>
<div class="t" style="left:2661.60px;top:1566.29px;color:#e2e2e2;">b</div>
<div class="t" style="left:3069.00px;top:1566.29px;color:#e2e2e2;letter-spacing:0.076px;">Ctrl+5</div>
<div class="t" style="left:508.50px;top:1567.59px;color:#f2f2f2;letter-spacing:-0.665px;">Select subject</div>
<div class="t" style="left:790.30px;top:1567.89px;color:#f2f2f2;letter-spacing:-0.704px;">Remove background</div>

</body></html>
